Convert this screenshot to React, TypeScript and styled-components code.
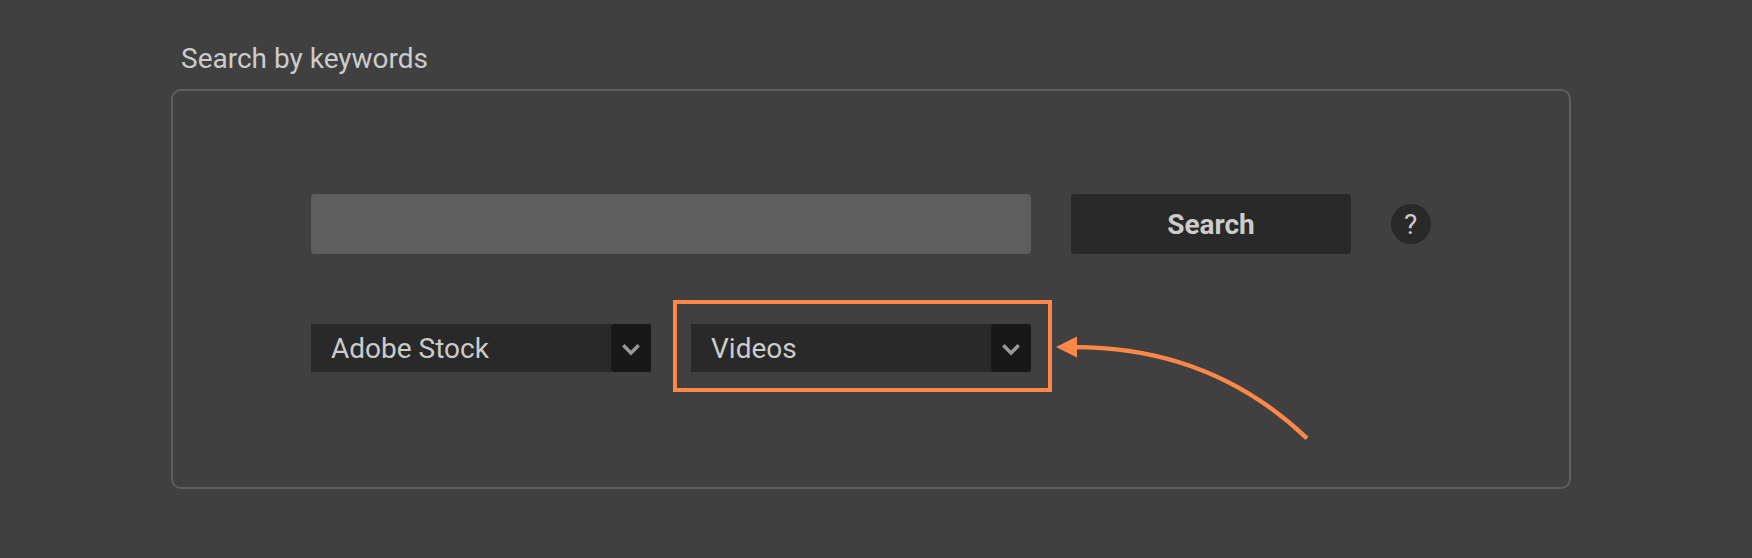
import React from "react";
import styled, { createGlobalStyle } from "styled-components";

const GlobalStyle = createGlobalStyle`
  * { box-sizing: border-box; }
  body {
    margin: 0;
    background: #404040;
    color: #cccccc;
    font-family: Roboto, sans-serif;
    font-size: 28px;
    line-height: 32px;
  }
`;

const Page = styled.main`
  height: 558px;
  padding: 43px 181px 0 171px;
`;

const Title = styled.h1`
  margin: 0 0 14px;
  padding-left: 10px;
  font: inherit;
`;

const Panel = styled.section`
  width: 1400px;
  height: 400px;
  padding: 103px 138px 0;
  border: 2px solid #5e5e5e;
  border-radius: 10px;
`;

const SearchRow = styled.div`
  display: flex;
  align-items: center;
  gap: 40px;
`;

const KeywordInput = styled.input`
  width: 720px;
  height: 60px;
  padding: 0 20px;
  border: 0;
  border-radius: 4px;
  outline: 0;
  background: #5e5e5e;
  color: inherit;
  font: inherit;
`;

const SearchButton = styled.button`
  width: 280px;
  height: 60px;
  padding: 2px 0 0;
  border: 0;
  border-radius: 4px;
  background: #292929;
  color: inherit;
  font: inherit;
  font-weight: 700;
`;

const HelpBadge = styled.span`
  display: flex;
  align-items: center;
  justify-content: center;
  width: 40px;
  height: 40px;
  padding: 2px 1px 0 0;
  border-radius: 50%;
  background: #292929;
`;

const FilterRow = styled.div`
  display: flex;
  gap: 40px;
  margin-top: 70px;
`;

const SelectSlot = styled.div`
  position: relative;
`;

const Select = styled.div`
  display: flex;
  width: 340px;
  height: 48px;
  background: #292929;
`;

const SelectValue = styled.span`
  flex: 1;
  padding: 9px 0 0 20px;
`;

const SelectToggle = styled.span`
  display: flex;
  width: 40px;
  border-radius: 4px;
  background: #181818;
`;

const Highlight = styled.div`
  position: absolute;
  top: -24px;
  left: -18px;
  width: 379px;
  height: 92px;
  border: 4px solid #ff8848;
`;

const Arrow = styled.svg`
  position: absolute;
  top: 0;
  left: 360px;
  overflow: visible;
`;

function Dropdown({ value }: { value: string }) {
  return (
    <Select>
      <SelectValue>{value}</SelectValue>
      <SelectToggle>
        <svg width="40" height="48" viewBox="0 0 40 48" fill="none">
          <path d="M12.3 21.3 20 29l7.700-7.700" stroke="#999999" strokeWidth="3.400" />
        </svg>
      </SelectToggle>
    </Select>
  );
}

export default function App() {
  return (
    <>
      <GlobalStyle />
      <Page>
        <Title>Search by keywords</Title>
        <Panel>
          <SearchRow>
            <KeywordInput aria-label="Keywords" />
            <SearchButton>Search</SearchButton>
            <HelpBadge>?</HelpBadge>
          </SearchRow>
          <FilterRow>
            <Dropdown value="Adobe Stock" />
            <SelectSlot>
              <Dropdown value="Videos" />
              <Highlight />
              <Arrow width="260" height="120" viewBox="0 0 260 120" fill="none">
                <path d="M24 23.100Q160 23.100 256 114.300" stroke="#ff8848" strokeWidth="4.400" />
                <path d="M5 23.100 26 12.600v21z" fill="#ff8848" />
              </Arrow>
            </SelectSlot>
          </FilterRow>
        </Panel>
      </Page>
    </>
  );
}
